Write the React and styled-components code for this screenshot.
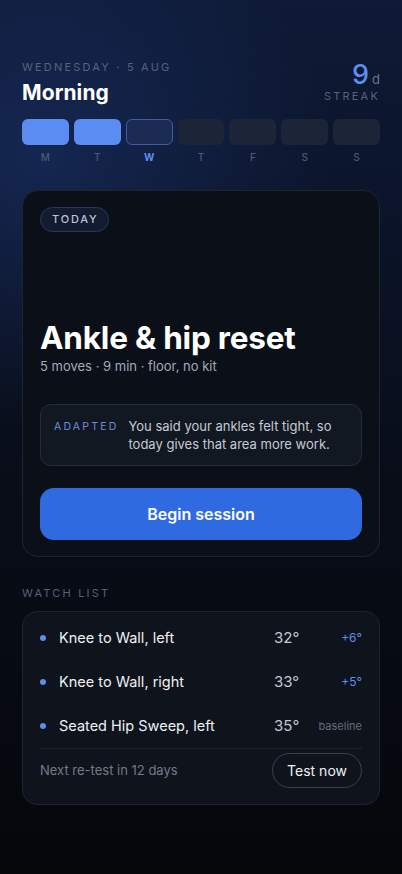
import React from 'react';
import styled, { createGlobalStyle } from 'styled-components';

const GlobalStyle = createGlobalStyle`
  html, body {
    margin: 0;
    padding: 0;
    background: #05070b;
  }
  * {
    box-sizing: border-box;
  }
`;

const Screen = styled.div`
  width: 402px;
  min-height: 874px;
  padding: 60px 22px 40px;
  font-family: Inter, "Noto Sans", sans-serif;
  color: #ffffff;
  background:
    radial-gradient(ellipse 420px 380px at 10% 18%, rgba(28, 52, 110, 0.55), rgba(28, 52, 110, 0) 70%),
    linear-gradient(180deg, #0e1a36 0%, #0b1429 25%, #080d18 55%, #05070b 100%);
`;

const Header = styled.div`
  display: flex;
  justify-content: space-between;
  align-items: flex-end;
`;

const Eyebrow = styled.div`
  font-size: ${(p) => p.size || '11px'};
  letter-spacing: 2.2px;
  color: ${(p) => p.color || '#56627c'};
  text-transform: uppercase;
`;

const Greeting = styled.h1`
  margin: 6px 0 0;
  font-size: 21px;
  font-weight: 700;
  letter-spacing: 0.1px;
`;

const Streak = styled.div`
  display: flex;
  flex-direction: column;
  align-items: flex-end;
  gap: 1px;
  padding-bottom: 2px;
`;

const StreakValue = styled.div`
  font-size: 27px;
  font-weight: 500;
  color: #5b8ff0;
  line-height: 1;
  span {
    font-size: 13px;
    font-weight: 400;
    color: #6a7590;
    margin-left: 3px;
  }
`;

const Week = styled.div`
  display: grid;
  grid-template-columns: repeat(7, 1fr);
  gap: 5px;
  margin-top: 14px;
`;

const Day = styled.div`
  display: flex;
  flex-direction: column;
  align-items: center;
  gap: 6px;
`;

const DayBar = styled.div`
  width: 100%;
  height: 26px;
  border-radius: 6px;
  background: ${(p) => (p.state === 'done' ? '#5a8cf2' : p.state === 'now' ? '#1b2a52' : '#1c2538')};
  border: 1px solid ${(p) => (p.state === 'now' ? '#3f5c9e' : 'transparent')};
`;

const DayLabel = styled.div`
  font-size: 10px;
  font-weight: ${(p) => (p.active ? 700 : 500)};
  color: ${(p) => (p.active ? '#5b8ff0' : '#4f5a70')};
`;

const Card = styled.section`
  margin-top: 27px;
  padding: 16px 17px 16px;
  border-radius: 16px;
  background: #0b0f18;
  border: 1px solid #1c2331;
`;

const Pill = styled.div`
  display: inline-block;
  padding: 5px 10px 5px 11px;
  border-radius: 13px;
  border: 1px solid #2a3858;
  background: #121b30;
  font-size: 11px;
  line-height: 13px;
  font-weight: 500;
  letter-spacing: 1.8px;
  color: #b9c3d8;
`;

const Title = styled.h2`
  margin: 89px 0 0;
  font-size: 31.5px;
  font-weight: 700;
  letter-spacing: -0.2px;
  line-height: 1.1;
`;

const Meta = styled.div`
  margin-top: 2px;
  font-size: 13px;
  color: #a3aab8;
`;

const Note = styled.div`
  display: flex;
  gap: 10px;
  margin-top: 30px;
  padding: 12px 16px 12px 13px;
  border-radius: 11px;
  background: #121822;
  border: 1px solid #242c3a;
`;

const NoteText = styled.p`
  margin: 0;
  font-size: 13px;
  line-height: 18px;
  color: #c6cad3;
`;

const PrimaryButton = styled.button`
  display: block;
  width: 100%;
  height: 52px;
  margin-top: 22px;
  border: none;
  border-radius: 14px;
  background: #2f6ae0;
  color: #ffffff;
  font-family: inherit;
  font-size: 16px;
  font-weight: 600;
`;

const Section = styled.div`
  margin-top: 29px;
`;

const ListCard = styled.div`
  margin-top: 11px;
  padding: 4px 17px 16px;
  border-radius: 15px;
  background: #0f141c;
  border: 1px solid #1e2531;
`;

const Row = styled.div`
  display: grid;
  grid-template-columns: 19px 1fr 38px 50px;
  align-items: center;
  height: 44px;
`;

const Dot = styled.span`
  width: 6px;
  height: 6px;
  border-radius: 50%;
  background: #5b8cf0;
`;

const RowName = styled.span`
  font-size: 14.5px;
  color: #eef0f4;
`;

const Degrees = styled.span`
  font-size: 15px;
  color: #c3c7cf;
`;

const Delta = styled.span`
  text-align: right;
  font-size: ${(p) => (p.muted ? '11px' : '12px')};
  color: ${(p) => (p.muted ? '#646b79' : '#5b8ff0')};
`;

const Footer = styled.div`
  display: flex;
  justify-content: space-between;
  align-items: center;
  padding-top: 4px;
  border-top: 1px solid #1d2430;
`;

const FooterText = styled.span`
  font-size: 13px;
  color: #737a88;
`;

const GhostButton = styled.button`
  height: 35px;
  padding: 0 14px;
  border-radius: 18px;
  border: 1px solid #3a414e;
  background: transparent;
  color: #eef0f4;
  font-family: inherit;
  font-size: 14px;
`;

const days = [
  { label: 'M', state: 'done' },
  { label: 'T', state: 'done' },
  { label: 'W', state: 'now' },
  { label: 'T', state: 'todo' },
  { label: 'F', state: 'todo' },
  { label: 'S', state: 'todo' },
  { label: 'S', state: 'todo' },
];

const watch = [
  { name: 'Knee to Wall, left', deg: '32°', delta: '+6°' },
  { name: 'Knee to Wall, right', deg: '33°', delta: '+5°' },
  { name: 'Seated Hip Sweep, left', deg: '35°', delta: 'baseline', muted: true },
];

export default function App() {
  return (
    <>
      <GlobalStyle />
      <Screen>
        <Header>
          <div>
            <Eyebrow>Wednesday · 5 Aug</Eyebrow>
            <Greeting>Morning</Greeting>
          </div>
          <Streak>
            <StreakValue>9<span>d</span></StreakValue>
            <Eyebrow>Streak</Eyebrow>
          </Streak>
        </Header>

        <Week>
          {days.map((d, i) => (
            <Day key={i}>
              <DayBar state={d.state} />
              <DayLabel active={d.state === 'now'}>{d.label}</DayLabel>
            </Day>
          ))}
        </Week>

        <Card>
          <Pill>TODAY</Pill>
          <Title>Ankle &amp; hip reset</Title>
          <Meta>5 moves · 9 min · floor, no kit</Meta>
          <Note>
            <Eyebrow color="#6b8fd6" size="10.5px" style={{ paddingTop: 3 }}>Adapted</Eyebrow>
            <NoteText>You said your ankles felt tight, so today gives that area more work.</NoteText>
          </Note>
          <PrimaryButton>Begin session</PrimaryButton>
        </Card>

        <Section>
          <Eyebrow>Watch list</Eyebrow>
          <ListCard>
            {watch.map((w) => (
              <Row key={w.name}>
                <Dot />
                <RowName>{w.name}</RowName>
                <Degrees>{w.deg}</Degrees>
                <Delta muted={w.muted}>{w.delta}</Delta>
              </Row>
            ))}
            <Footer>
              <FooterText>Next re-test in 12 days</FooterText>
              <GhostButton>Test now</GhostButton>
            </Footer>
          </ListCard>
        </Section>
      </Screen>
    </>
  );
}
